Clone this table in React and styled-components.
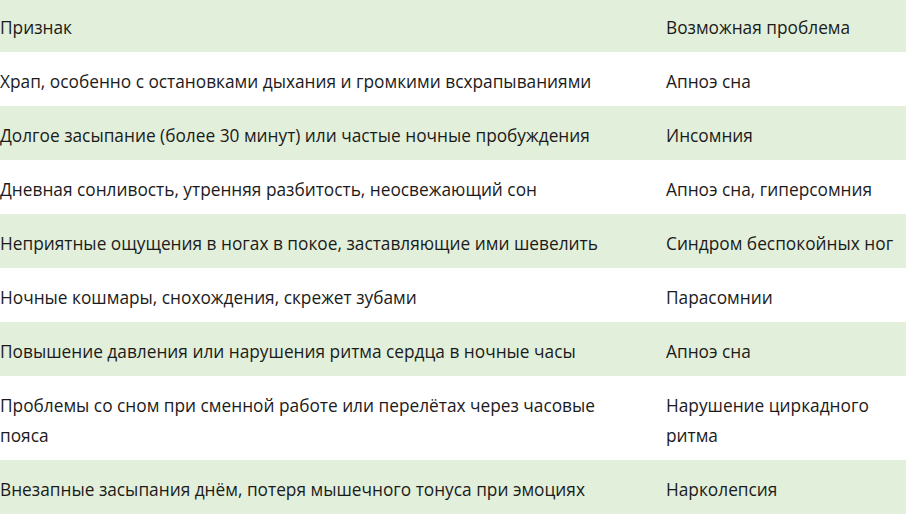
import styled, { createGlobalStyle } from 'styled-components';

const GlobalStyle = createGlobalStyle`
  html, body {
    margin: 0;
    padding: 0;
    background: #ffffff;
  }
  body {
    font-family: 'Open Sans', 'Noto Sans', sans-serif;
    color: #1b1b1b;
    overflow: hidden;
  }
`;

const rows = [
  ['Храп, особенно с остановками дыхания и громкими всхрапываниями', 'Апноэ сна'],
  ['Долгое засыпание (более 30 минут) или частые ночные пробуждения', 'Инсомния'],
  ['Дневная сонливость, утренняя разбитость, неосвежающий сон', 'Апноэ сна, гиперсомния'],
  ['Неприятные ощущения в ногах в покое, заставляющие ими шевелить', 'Синдром беспокойных ног'],
  ['Ночные кошмары, снохождения, скрежет зубами', 'Парасомнии'],
  ['Повышение давления или нарушения ритма сердца в ночные часы', 'Апноэ сна'],
  ['Проблемы со сном при сменной работе или перелётах через часовые пояса', 'Нарушение циркадного ритма'],
  ['Внезапные засыпания днём, потеря мышечного тонуса при эмоциях', 'Нарколепсия'],
];

const Table = styled.div`
  width: 906px;
  margin-top: -2px;
  display: flex;
  flex-direction: column;
`;

const Row = styled.div`
  display: grid;
  grid-template-columns: 666px 240px;
  background: ${(p) => (p.$shaded ? '#e2efda' : '#ffffff')};
`;

const Cell = styled.div`
  padding: 15px 0 9px;
  font-size: 17.3px;
  line-height: 30px;
  padding-right: ${(p) => (p.$last ? '0' : '24px')};
`;

const App = () => {
  return (
    <>
      <GlobalStyle />
      <Table>
        <Row $shaded>
          <Cell>Признак</Cell>
          <Cell $last>Возможная проблема</Cell>
        </Row>
        {rows.map(([sign, problem], i) => (
          <Row key={i} $shaded={i % 2 === 1}>
            <Cell>{sign}</Cell>
            <Cell $last>{problem}</Cell>
          </Row>
        ))}
      </Table>
    </>
  );
};

export default App;
